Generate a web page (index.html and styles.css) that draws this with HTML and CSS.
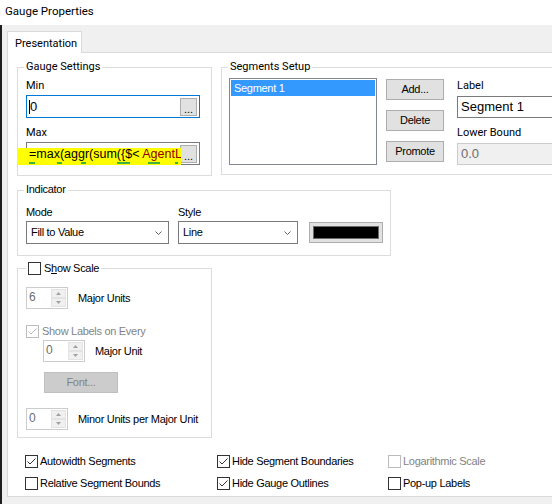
FILE: index.html
```html
<!DOCTYPE html>
<html>
<head>
<meta charset="utf-8">
<link rel="stylesheet" href="styles.css">
</head>
<body>
<div class="titlebar seg">Gauge Properties</div>
<div class="frame">
  <div class="tabs">
    <div class="tab seg">Presentation</div>
  </div>
  <div class="panel">
    <div class="row-top">
      <div class="group gauge">
        <div class="legend seg">Gauge Settings</div>
        <div class="field-label seg">Min</div>
        <div class="input focus">
          <span class="caret"></span><span class="val">0</span>
          <span class="dots ms">...</span>
        </div>
        <div class="field-label seg gap-max">Max</div>
        <div class="input expr">
          <span class="dots ms">...</span>
          <div class="highlight">
            <div class="expr-line">=max(aggr(sum({$&lt; <span class="dark-red">AgentL</span></div>
            <div class="frags"><i class="f1"></i><i class="f2"></i><i class="f3"></i><i class="f4"></i><i class="f5"></i><i class="f6"></i></div>
          </div>
        </div>
      </div>
      <div class="group segments">
        <div class="legend seg">Segments Setup</div>
        <div class="listbox">
          <div class="list-item ms">Segment 1</div>
        </div>
        <div class="btn-col">
          <div class="btn ms">Add...</div>
          <div class="btn ms">Delete</div>
          <div class="btn ms">Promote</div>
        </div>
        <div class="seg-props">
          <div class="field-label seg">Label</div>
          <div class="textbox big">Segment 1</div>
          <div class="field-label seg gap-lb">Lower Bound</div>
          <div class="textbox big disabled">0.0</div>
        </div>
      </div>
    </div>

    <div class="group indicator">
      <div class="legend ms">Indicator</div>
      <div class="ind-col mode">
        <div class="field-label ms">Mode</div>
        <div class="combo ms"><span>Fill to Value</span>
          <svg class="chev" width="7" height="4" viewBox="0 0 7 4"><polyline points="0.5,0.5 3.5,3.5 6.5,0.5" fill="none" stroke="#606060" stroke-width="1"/></svg>
        </div>
      </div>
      <div class="ind-col style">
        <div class="field-label ms">Style</div>
        <div class="combo ms"><span>Line</span>
          <svg class="chev" width="7" height="4" viewBox="0 0 7 4"><polyline points="0.5,0.5 3.5,3.5 6.5,0.5" fill="none" stroke="#606060" stroke-width="1"/></svg>
        </div>
      </div>
      <div class="color-btn"><div class="swatch"></div></div>
    </div>

    <div class="group scale">
      <div class="legend cb-legend ms"><span class="cb"></span><span>S<span class="u">h</span>ow Scale</span></div>
      <div class="spin-row">
        <div class="spin"><span class="spin-val ms">6</span>
          <div class="spin-btns">
            <div class="sb"><svg width="5" height="3" viewBox="0 0 5 3"><polygon points="2.5,0 5,3 0,3" fill="#a0a0a0"/></svg></div>
            <div class="sb"><svg width="5" height="3" viewBox="0 0 5 3"><polygon points="0,0 5,0 2.5,3" fill="#a0a0a0"/></svg></div>
          </div>
        </div>
        <span class="ms spin-label">Major Units</span>
      </div>
      <div class="check-row labels-row">
        <span class="cb disabled checked"><svg width="11" height="11" viewBox="0 0 11 11"><polyline points="1.5,5.5 4,8 9.5,2.5" fill="none" stroke="#bcbcbc" stroke-width="1"/></svg></span>
        <span class="ms grey">Show Labels on Every</span>
      </div>
      <div class="spin-row indent">
        <div class="spin"><span class="spin-val ms">0</span>
          <div class="spin-btns">
            <div class="sb"><svg width="5" height="3" viewBox="0 0 5 3"><polygon points="2.5,0 5,3 0,3" fill="#a0a0a0"/></svg></div>
            <div class="sb"><svg width="5" height="3" viewBox="0 0 5 3"><polygon points="0,0 5,0 2.5,3" fill="#a0a0a0"/></svg></div>
          </div>
        </div>
        <span class="ms spin-label">Major Unit</span>
      </div>
      <div class="btn font-btn ms">Font...</div>
      <div class="spin-row minor">
        <div class="spin"><span class="spin-val ms">0</span>
          <div class="spin-btns">
            <div class="sb"><svg width="5" height="3" viewBox="0 0 5 3"><polygon points="2.5,0 5,3 0,3" fill="#a0a0a0"/></svg></div>
            <div class="sb"><svg width="5" height="3" viewBox="0 0 5 3"><polygon points="0,0 5,0 2.5,3" fill="#a0a0a0"/></svg></div>
          </div>
        </div>
        <span class="ms spin-label">Minor Units per Major Unit</span>
      </div>
    </div>

    <div class="options">
      <div class="opt"><span class="cb checked"><svg width="11" height="11" viewBox="0 0 11 11"><polyline points="1.5,5.5 4,8 9.5,2.5" fill="none" stroke="#333" stroke-width="1"/></svg></span><span class="ms">Autowidth Segments</span></div>
      <div class="opt"><span class="cb checked"><svg width="11" height="11" viewBox="0 0 11 11"><polyline points="1.5,5.5 4,8 9.5,2.5" fill="none" stroke="#333" stroke-width="1"/></svg></span><span class="ms">Hide Segment Boundaries</span></div>
      <div class="opt"><span class="cb disabled"></span><span class="ms grey">Logarithmic Scale</span></div>
      <div class="opt"><span class="cb"></span><span class="ms">Relative Segment Bounds</span></div>
      <div class="opt"><span class="cb checked"><svg width="11" height="11" viewBox="0 0 11 11"><polyline points="1.5,5.5 4,8 9.5,2.5" fill="none" stroke="#333" stroke-width="1"/></svg></span><span class="ms">Hide Gauge Outlines</span></div>
      <div class="opt"><span class="cb"></span><span class="ms">Pop-up Labels</span></div>
    </div>
  </div>
</div>
</body>
</html>
```
FILE: styles.css
```css
* { box-sizing: border-box; }
html, body { margin: 0; padding: 0; }
body {
  width: 552px;
  height: 504px;
  overflow: hidden;
  background: #f0f0f0;
  color: #000;
  font-family: "Liberation Sans", Arial, sans-serif;
}
.seg { font-family: Roboto, "Liberation Sans", sans-serif; font-size: 11px; line-height: 15px; }
.ms { font-family: "Liberation Sans", Arial, sans-serif; font-size: 11px; letter-spacing: -0.3px; line-height: 15px; }
.grey { color: #838383; }

.titlebar {
  height: 25px;
  background: #fff;
  padding: 4px 0 0 5px;
  font-size: 11.5px;
  white-space: nowrap;
}
.frame {
  height: 479px;
  border-left: 2px solid #1f1f1f;
  background: #f0f0f0;
}
.tabs { padding: 6px 0 0 5px; height: 27px; }
.tab {
  position: relative;
  z-index: 1;
  width: 75px;
  height: 22px;
  background: #fff;
  border: 1px solid #d9d9d9;
  border-bottom: none;
  padding: 4px 0 0 7px;
}
.panel {
  margin-left: 5px;
  width: 545px;
  height: 445px;
  background: #fff;
  border: 1px solid #d9d9d9;
  border-right: none;
  padding: 14px 0 0 9px;
}
.row-top { display: flex; gap: 9px; align-items: flex-start; }
.group {
  position: relative;
  border: 1px solid #dcdcdc;
}
.legend {
  position: absolute;
  top: -9px;
  left: 6px;
  background: #fff;
  padding: 0 2px;
  white-space: nowrap;
}
.gauge {
  width: 195px;
  height: 109px;
  padding: 10px 0 0 8px;
}
.field-label { height: 15px; white-space: nowrap; }
.gap-max { margin-top: 7px; }
.input {
  position: relative;
  margin-top: 2px;
  width: 174px;
  height: 23px;
  display: flex;
  align-items: center;
  padding-left: 2px;
  background: #fff;
}
.input.focus { border: 1px solid #0078d7; }
.input.expr { border: 1px solid #7a7a7a; }
.caret { width: 1px; height: 14px; background: #000; }
.val { font-family: "Liberation Sans", sans-serif; font-size: 13px; }
.dots {
  margin-left: auto;
  margin-right: 2px;
  width: 17px;
  height: 18px;
  background: #e1e1e1;
  border: 1px solid #adadad;
  text-align: center;
  line-height: 20px;
  letter-spacing: 0;
}
.highlight {
  position: absolute;
  left: -10px;
  top: 5px;
  width: 164px;
  height: 17px;
  background: #ffff00;
  overflow: hidden;
  padding-left: 12px;
  white-space: nowrap;
}
.expr-line {
  font-family: "Liberation Sans", sans-serif;
  font-size: 12.5px;
  line-height: 13px;
  height: 13px;
}
.dark-red { color: #8b0000; }
.frags { display: flex; height: 2px; margin-top: 1px; }
.frags i { display: block; height: 2px; background: #3cb43c; }
.f1 { width: 6px; margin-left: 0; }
.f2 { width: 5px; margin-left: 22px; }
.f3 { width: 5px; margin-left: 19px; }
.f4 { width: 13px; margin-left: 31px; }
.f5 { width: 12px; margin-left: 18px; }
.f6 { width: 3px; margin-left: 15px; }

.segments {
  flex: 1;
  height: 108px;
  padding: 10px 0 0 7px;
  display: flex;
  align-items: flex-start;
  border-right: none;
}
.listbox {
  width: 148px;
  height: 87px;
  border: 1px solid #828790;
  padding: 1px;
  background: #fff;
}
.list-item {
  height: 16px;
  line-height: 16px;
  background: #3399ff;
  color: #fff;
  padding-left: 3px;
}
.btn-col {
  margin-left: 9px;
  margin-top: 1px;
  display: flex;
  flex-direction: column;
  gap: 10px;
}
.btn {
  width: 58px;
  height: 21px;
  background: #e1e1e1;
  border: 1px solid #adadad;
  text-align: center;
  line-height: 19px;
}
.seg-props { margin-left: 13px; flex: 1; }
.textbox {
  margin-top: 3px;
  height: 22px;
  border: 1px solid #7a7a7a;
  border-right: none;
  background: #fff;
  padding-left: 3px;
  font-family: "Liberation Sans", sans-serif;
  font-size: 13px;
  line-height: 20px;
}
.textbox.disabled { background: #f0f0f0; border-color: #cccccc; color: #6d6d6d; }
.gap-lb { margin-top: 7px; }

.indicator {
  margin-top: 14px;
  width: 374px;
  height: 66px;
  padding: 14px 0 0 8px;
  display: flex;
  align-items: flex-start;
}
.ind-col .field-label { margin-bottom: 1px; }
.mode { width: 143px; }
.style { width: 120px; margin-left: 9px; }
.combo {
  height: 23px;
  border: 1px solid #7a7a7a;
  background: #fff;
  display: flex;
  align-items: center;
  padding: 0 6px 0 4px;
  justify-content: space-between;
}
.chev { display: block; }
.color-btn {
  margin-left: 11px;
  margin-top: 17px;
  width: 74px;
  height: 21px;
  border: 1px solid #adadad;
  background: #e1e1e1;
  padding: 3px;
}
.swatch { width: 100%; height: 100%; background: #000; border: 1px solid #6a6a6a; }

.scale {
  margin-top: 12px;
  width: 195px;
  height: 170px;
  padding: 18px 0 0 8px;
}
.cb-legend {
  top: -7px;
  left: 8px;
  display: flex;
  align-items: center;
  gap: 3px;
  height: 13px;
}
.u { text-decoration: underline; }
.cb {
  display: inline-flex;
  align-items: center;
  justify-content: center;
  width: 13px;
  height: 13px;
  flex: none;
  border: 1px solid #333;
  background: #fff;
}
.cb.disabled { border-color: #bcbcbc; }
.spin-row { display: flex; align-items: center; }
.spin {
  width: 42px;
  height: 22px;
  border: 1px solid #cccccc;
  display: flex;
  background: #fff;
}
.spin-val { flex: 1; padding-left: 2px; color: #6d6d6d; line-height: 18px; font-size: 12px; }
.spin-btns { width: 16px; display: flex; flex-direction: column; padding: 1px 1px 1px 0; }
.sb {
  flex: 1;
  background: #f0f0f0;
  border: 1px solid #e3e3e3;
  display: flex;
  align-items: center;
  justify-content: center;
}
.spin-label { margin-left: 10px; white-space: nowrap; }
.check-row { display: flex; align-items: center; gap: 3px; }
.labels-row { margin-top: 16px; height: 13px; }
.indent { margin-top: 2px; margin-left: 17px; }
.font-btn {
  margin-top: 10px;
  margin-left: 18px;
  width: 74px;
  background: #cccccc;
  border-color: #bfbfbf;
  color: #838383;
}
.minor { margin-top: 15px; }

.options {
  margin-top: 15px;
  margin-left: 8px;
  display: grid;
  grid-template-columns: 192px 171px 150px;
  grid-auto-rows: 17px;
  row-gap: 5px;
}
.opt { display: flex; align-items: center; gap: 2px; white-space: nowrap; }
```
